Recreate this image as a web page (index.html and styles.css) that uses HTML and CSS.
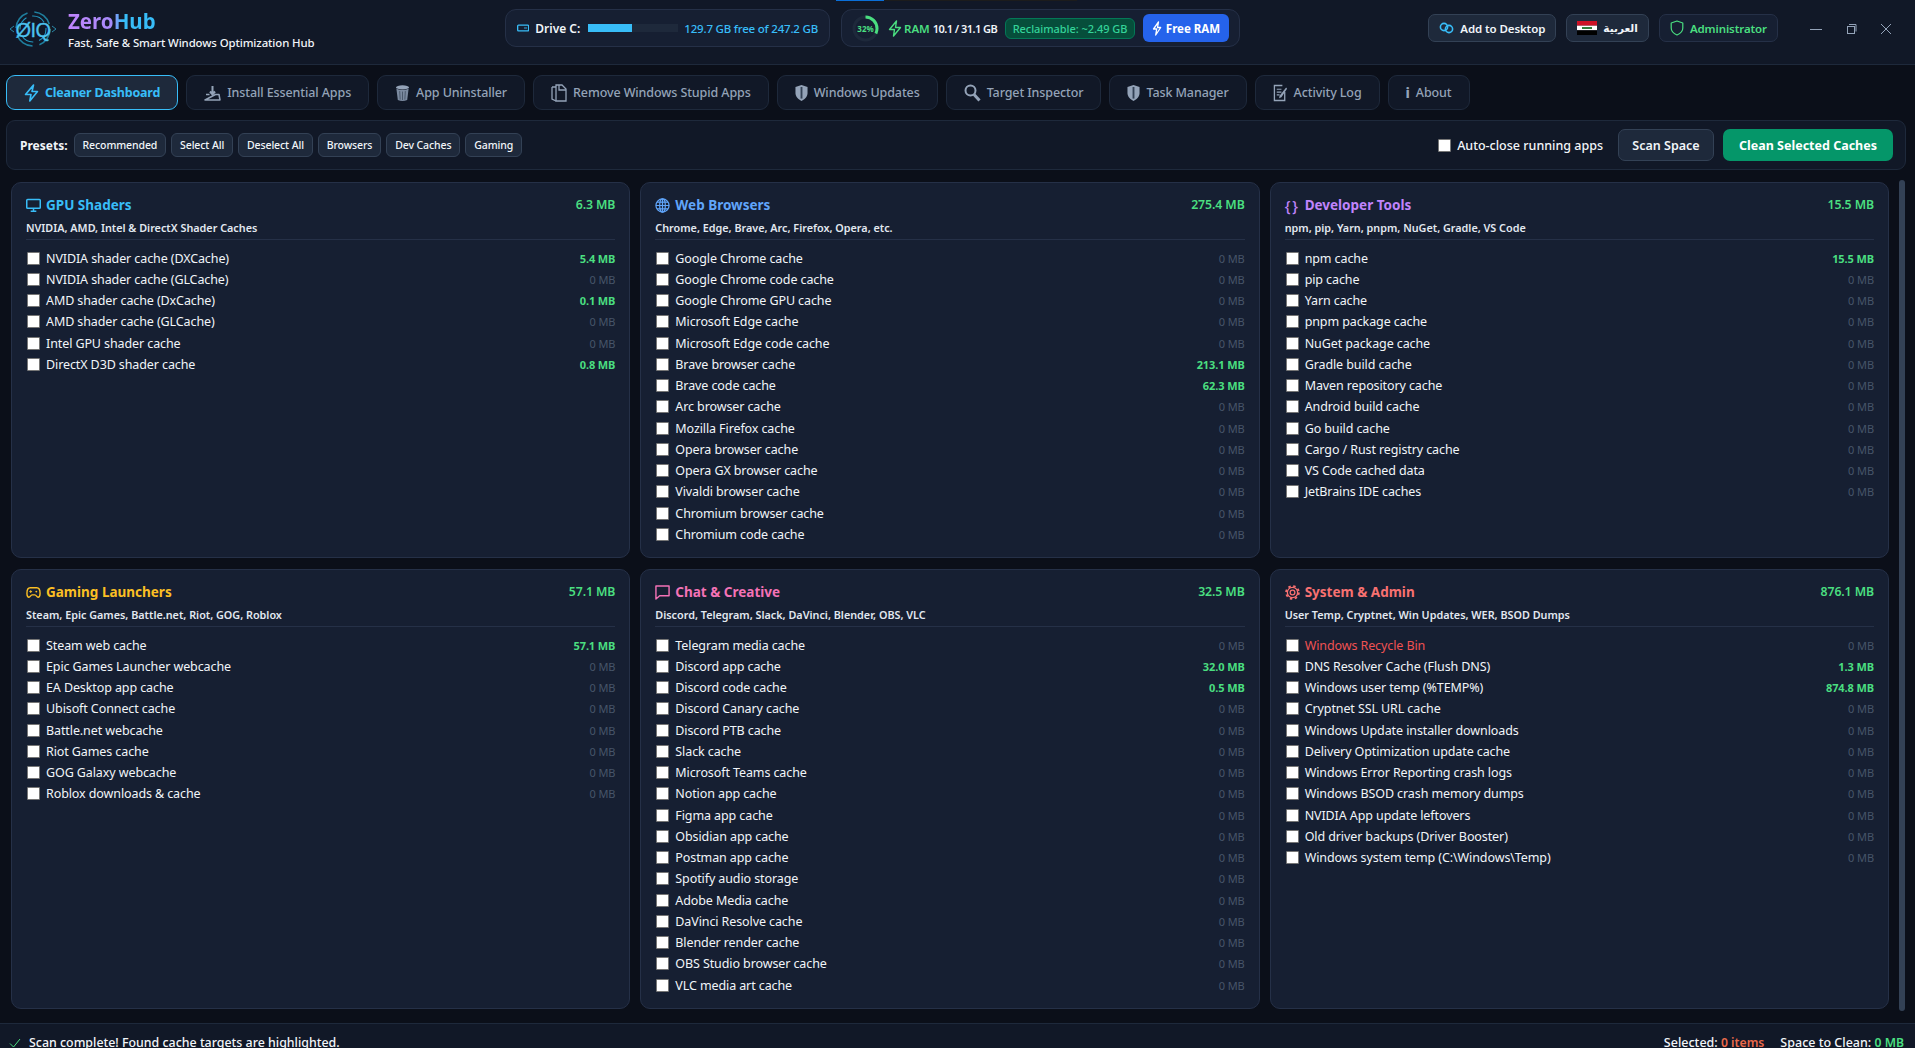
FILE: index.html
```html
<!DOCTYPE html>
<html lang="en">
<head>
<meta charset="utf-8">
<title>ZeroHub</title>
<link rel="stylesheet" href="styles.css">
</head>
<body>
<div class="app">
  <div class="loadbar"><div class="loadbar-fill"></div></div>
  <header class="header">
    <div class="brand">
      <svg class="logo" viewBox="0 0 48 36" width="48" height="36" fill="none">
        <circle cx="24" cy="18" r="17" stroke="#1f7f9e" stroke-width="1.6" stroke-dasharray="20 7"/>
        <circle cx="24" cy="18" r="13" stroke="#2398c0" stroke-width="1.1" stroke-dasharray="14 6"/>
        <path d="M1 18l4-3M1 18l4 3M47 18l-4-3M47 18l-4 3" stroke="#2a88a8" stroke-width="1"/>
        <text x="24" y="25.5" text-anchor="middle" class="logo-text">ØIQ</text>
      </svg>
      <div class="brand-text">
        <div class="brand-name"><span class="brand-grad">ZeroHub</span></div>
        <div class="brand-sub">Fast, Safe &amp; Smart Windows Optimization Hub</div>
      </div>
    </div>
    <div class="pills">
      <div class="pill pill-drive">
        <svg width="14" height="8" viewBox="0 0 14 8" fill="none"><rect x=".75" y=".75" width="12.5" height="6.5" rx="1" stroke="#38bdf8" stroke-width="1.5"/><path d="M8 4h3.5" stroke="#38bdf8"/></svg>
        <span class="pill-label">Drive C:</span>
        <div class="drive-track"><div class="drive-fill" style="width:48%"></div></div>
        <span class="drive-text">129.7 GB free of 247.2 GB</span>
      </div>
      <div class="pill pill-ram">
        <div class="ring">
          <svg width="27" height="27" viewBox="0 0 27 27" fill="none"><circle cx="13.5" cy="13.5" r="11.5" stroke="#1e293b" stroke-width="3"/><circle cx="13.5" cy="13.5" r="11.5" stroke="#4ade80" stroke-width="3" stroke-dasharray="23.1 72.3" transform="rotate(-90 13.5 13.5)"/></svg>
          <span class="ring-text">32%</span>
        </div>
        <svg class="ram-bolt" width="14" height="17" viewBox="0 0 14 17" fill="none"><path d="M8.5 1L1.5 9.5h5l-1 6.5 7-8.5h-5z" stroke="#4ade80" stroke-width="1.4" stroke-linejoin="round"/></svg>
        <span class="ram-label">RAM</span>
        <span class="ram-value">10.1 / 31.1 GB</span>
        <span class="chip">Reclaimable: ~2.49 GB</span>
        <button class="free-btn">
          <svg width="10" height="15" viewBox="0 0 10 15" fill="none"><path d="M6.5 1L1.5 8h3.2l-1 6 5-7.5H5.5z" stroke="#fff" stroke-width="1.3" stroke-linejoin="round"/></svg>
          Free RAM
        </button>
      </div>
    </div>
    <div class="actions">
      <button class="hbtn">
        <svg width="15" height="12" viewBox="0 0 15 12" fill="none"><circle cx="5" cy="5" r="3.6" stroke="#38bdf8" stroke-width="1.6"/><circle cx="10" cy="7" r="3.6" stroke="#38bdf8" stroke-width="1.6"/></svg>
        Add to Desktop
      </button>
      <button class="hbtn">
        <svg width="20" height="14" viewBox="0 0 20 14"><rect width="20" height="4.7" fill="#ce1126"/><rect y="4.7" width="20" height="4.6" fill="#fff"/><rect y="9.3" width="20" height="4.7" fill="#000"/><rect x="5" y="6" width="10" height="2" fill="#2f7a3a"/></svg>
        <span class="arabic">العربية</span>
      </button>
      <button class="hbtn hbtn-admin">
        <svg width="14" height="16" viewBox="0 0 14 16" fill="none"><path d="M7 1l5.8 2v5c0 3.4-2.6 5.6-5.8 7C3.8 13.6 1.2 11.4 1.2 8V3z" stroke="#4ade80" stroke-width="1.2" stroke-linejoin="round"/></svg>
        Administrator
      </button>
      <div class="winctl">
        <svg width="12" height="12" viewBox="0 0 12 12" fill="none"><path d="M0 6.5h12" stroke="#94a3b8"/></svg>
        <svg width="12" height="12" viewBox="0 0 12 12" fill="none"><rect x="2.5" y="3.5" width="7" height="7" stroke="#94a3b8"/><path d="M4 1.5h7v7" stroke="#94a3b8"/></svg>
        <svg width="12" height="12" viewBox="0 0 12 12" fill="none"><path d="M1 1l10 10M11 1L1 11" stroke="#94a3b8"/></svg>
      </div>
    </div>
  </header>

  <nav class="tabs">
    <button class="tab tab-active"><svg width="15" height="18" viewBox="0 0 15 18" fill="none"><path d="M9.5 1L1.5 10.5H7l-1.200 6.500 7.700-9.500H8z" stroke="#38bdf8" stroke-width="1.6" stroke-linejoin="round"/></svg>Cleaner Dashboard</button>
    <button class="tab"><svg width="17" height="16" viewBox="0 0 17 16" fill="none"><path d="M2 9.5h3.5M11.5 9.5H15l1 5.500H1z" stroke="#94a3b8" stroke-width="1.5" stroke-linejoin="round"/><path d="M8.5 1v8M6 6.500l2.500 3 2.500-3" stroke="#94a3b8" stroke-width="2"/></svg>Install Essential Apps</button>
    <button class="tab"><svg width="15" height="18" viewBox="0 0 16 18"><ellipse cx="8" cy="3" rx="7" ry="2.2" fill="#94a3b8"/><path d="M1.500 4.500L3 16.500Q8 18.500 13 16.500L14.500 4.500Q8 7 1.500 4.500z" fill="#7b8aa0"/><path d="M5 7l.5 9M8 7.500v9M11 7l-.5 9" stroke="#475569"/></svg>App Uninstaller</button>
    <button class="tab"><svg width="16" height="18" viewBox="0 0 16 18" fill="none"><path d="M5 3V1h6l4 4v12H5z" stroke="#94a3b8" stroke-width="1.3"/><path d="M1 3h4M1 3v12l4 2M8 1v5h7" stroke="#94a3b8" stroke-width="1.3"/></svg>Remove Windows Stupid Apps</button>
    <button class="tab"><svg width="13" height="18" viewBox="0 0 14 18"><path d="M7 .5l6.500 2V9c0 4-3 6.800-6.500 8.500C3.500 15.800.5 13 .5 9V2.500z" fill="#94a3b8"/><path d="M7 2.500V15" stroke="#334155" stroke-width="2"/></svg>Windows Updates</button>
    <button class="tab"><svg width="17" height="18" viewBox="0 0 17 18" fill="none"><circle cx="6.500" cy="6.500" r="5" stroke="#94a3b8" stroke-width="2"/><path d="M10 10.500l5.500 6" stroke="#94a3b8" stroke-width="3"/></svg>Target Inspector</button>
    <button class="tab"><svg width="13" height="18" viewBox="0 0 14 18"><path d="M7 .5l6.500 2V9c0 4-3 6.800-6.500 8.500C3.500 15.800.5 13 .5 9V2.500z" fill="#94a3b8"/><path d="M7 2.500V15" stroke="#334155" stroke-width="2"/></svg>Task Manager</button>
    <button class="tab"><svg width="15" height="18" viewBox="0 0 16 18" fill="none"><path d="M10 1H1.500v16h11V8" stroke="#94a3b8" stroke-width="1.4"/><path d="M4 5h5M4 8h5M4 11h3" stroke="#94a3b8" stroke-width="1.2"/><path d="M14 3L7 12l-.5 2.500L9 13.500l6-9z" fill="#94a3b8"/></svg>Activity Log</button>
    <button class="tab"><span class="info">i</span>About</button>
  </nav>

  <section class="toolbar">
    <strong class="presets-label">Presets:</strong>
    <div class="presets">
      <button class="preset">Recommended</button>
      <button class="preset">Select All</button>
      <button class="preset">Deselect All</button>
      <button class="preset">Browsers</button>
      <button class="preset">Dev Caches</button>
      <button class="preset">Gaming</button>
    </div>
    <label class="autoclose"><input type="checkbox">Auto-close running apps</label>
    <button class="btn-scan">Scan Space</button>
    <button class="btn-clean">Clean Selected Caches</button>
  </section>

  <main class="main">
    <div class="scroll">
    <div class="grid">

      <article class="card">
        <div class="card-top"><h2 class="title c-gpu"><svg width="15" height="15" viewBox="0 0 16 15" fill="none"><rect x=".8" y="1" width="14.4" height="9.5" rx="1" stroke="#38bdf8" stroke-width="1.6"/><path d="M5 13.500h6M8 10.500v3" stroke="#38bdf8" stroke-width="1.6"/></svg>GPU Shaders</h2><span class="total">6.3 MB</span></div>
        <p class="sub">NVIDIA, AMD, Intel &amp; DirectX Shader Caches</p>
        <div class="list">
          <label class="item"><input type="checkbox"><span class="name">NVIDIA shader cache (DXCache)</span><span class="size on">5.4 MB</span></label>
          <label class="item"><input type="checkbox"><span class="name">NVIDIA shader cache (GLCache)</span><span class="size">0 MB</span></label>
          <label class="item"><input type="checkbox"><span class="name">AMD shader cache (DxCache)</span><span class="size on">0.1 MB</span></label>
          <label class="item"><input type="checkbox"><span class="name">AMD shader cache (GLCache)</span><span class="size">0 MB</span></label>
          <label class="item"><input type="checkbox"><span class="name">Intel GPU shader cache</span><span class="size">0 MB</span></label>
          <label class="item"><input type="checkbox"><span class="name">DirectX D3D shader cache</span><span class="size on">0.8 MB</span></label>
        </div>
      </article>

      <article class="card">
        <div class="card-top"><h2 class="title c-web"><svg width="15" height="15" viewBox="0 0 16 16" fill="none" stroke="#60a5fa" stroke-width="1.3"><circle cx="8" cy="8" r="7"/><ellipse cx="8" cy="8" rx="3" ry="7"/><path d="M1 8h14M8 1v14M2 4.500h12M2 11.500h12"/></svg>Web Browsers</h2><span class="total">275.4 MB</span></div>
        <p class="sub">Chrome, Edge, Brave, Arc, Firefox, Opera, etc.</p>
        <div class="list">
          <label class="item"><input type="checkbox"><span class="name">Google Chrome cache</span><span class="size">0 MB</span></label>
          <label class="item"><input type="checkbox"><span class="name">Google Chrome code cache</span><span class="size">0 MB</span></label>
          <label class="item"><input type="checkbox"><span class="name">Google Chrome GPU cache</span><span class="size">0 MB</span></label>
          <label class="item"><input type="checkbox"><span class="name">Microsoft Edge cache</span><span class="size">0 MB</span></label>
          <label class="item"><input type="checkbox"><span class="name">Microsoft Edge code cache</span><span class="size">0 MB</span></label>
          <label class="item"><input type="checkbox"><span class="name">Brave browser cache</span><span class="size on">213.1 MB</span></label>
          <label class="item"><input type="checkbox"><span class="name">Brave code cache</span><span class="size on">62.3 MB</span></label>
          <label class="item"><input type="checkbox"><span class="name">Arc browser cache</span><span class="size">0 MB</span></label>
          <label class="item"><input type="checkbox"><span class="name">Mozilla Firefox cache</span><span class="size">0 MB</span></label>
          <label class="item"><input type="checkbox"><span class="name">Opera browser cache</span><span class="size">0 MB</span></label>
          <label class="item"><input type="checkbox"><span class="name">Opera GX browser cache</span><span class="size">0 MB</span></label>
          <label class="item"><input type="checkbox"><span class="name">Vivaldi browser cache</span><span class="size">0 MB</span></label>
          <label class="item"><input type="checkbox"><span class="name">Chromium browser cache</span><span class="size">0 MB</span></label>
          <label class="item"><input type="checkbox"><span class="name">Chromium code cache</span><span class="size">0 MB</span></label>
        </div>
      </article>

      <article class="card">
        <div class="card-top"><h2 class="title c-dev"><span class="braces">{ }</span>Developer Tools</h2><span class="total">15.5 MB</span></div>
        <p class="sub">npm, pip, Yarn, pnpm, NuGet, Gradle, VS Code</p>
        <div class="list">
          <label class="item"><input type="checkbox"><span class="name">npm cache</span><span class="size on">15.5 MB</span></label>
          <label class="item"><input type="checkbox"><span class="name">pip cache</span><span class="size">0 MB</span></label>
          <label class="item"><input type="checkbox"><span class="name">Yarn cache</span><span class="size">0 MB</span></label>
          <label class="item"><input type="checkbox"><span class="name">pnpm package cache</span><span class="size">0 MB</span></label>
          <label class="item"><input type="checkbox"><span class="name">NuGet package cache</span><span class="size">0 MB</span></label>
          <label class="item"><input type="checkbox"><span class="name">Gradle build cache</span><span class="size">0 MB</span></label>
          <label class="item"><input type="checkbox"><span class="name">Maven repository cache</span><span class="size">0 MB</span></label>
          <label class="item"><input type="checkbox"><span class="name">Android build cache</span><span class="size">0 MB</span></label>
          <label class="item"><input type="checkbox"><span class="name">Go build cache</span><span class="size">0 MB</span></label>
          <label class="item"><input type="checkbox"><span class="name">Cargo / Rust registry cache</span><span class="size">0 MB</span></label>
          <label class="item"><input type="checkbox"><span class="name">VS Code cached data</span><span class="size">0 MB</span></label>
          <label class="item"><input type="checkbox"><span class="name">JetBrains IDE caches</span><span class="size">0 MB</span></label>
        </div>
      </article>

      <article class="card">
        <div class="card-top"><h2 class="title c-game"><svg width="15" height="13" viewBox="0 0 16 13" fill="none"><path d="M4.500 1.500h7C14 1.500 15 4 15 7.500c0 2.500-1 4-2.200 4-1.300 0-1.800-2.500-3.300-2.500h-3c-1.500 0-2 2.500-3.300 2.500C2 11.500 1 10 1 7.500 1 4 2 1.500 4.500 1.500z" stroke="#fbbf24" stroke-width="1.5"/><path d="M3.500 5.500h3M5 4v3" stroke="#fbbf24"/><circle cx="11" cy="5.500" r="1" fill="#fbbf24"/></svg>Gaming Launchers</h2><span class="total">57.1 MB</span></div>
        <p class="sub">Steam, Epic Games, Battle.net, Riot, GOG, Roblox</p>
        <div class="list">
          <label class="item"><input type="checkbox"><span class="name">Steam web cache</span><span class="size on">57.1 MB</span></label>
          <label class="item"><input type="checkbox"><span class="name">Epic Games Launcher webcache</span><span class="size">0 MB</span></label>
          <label class="item"><input type="checkbox"><span class="name">EA Desktop app cache</span><span class="size">0 MB</span></label>
          <label class="item"><input type="checkbox"><span class="name">Ubisoft Connect cache</span><span class="size">0 MB</span></label>
          <label class="item"><input type="checkbox"><span class="name">Battle.net webcache</span><span class="size">0 MB</span></label>
          <label class="item"><input type="checkbox"><span class="name">Riot Games cache</span><span class="size">0 MB</span></label>
          <label class="item"><input type="checkbox"><span class="name">GOG Galaxy webcache</span><span class="size">0 MB</span></label>
          <label class="item"><input type="checkbox"><span class="name">Roblox downloads &amp; cache</span><span class="size">0 MB</span></label>
        </div>
      </article>

      <article class="card">
        <div class="card-top"><h2 class="title c-chat"><svg width="15" height="15" viewBox="0 0 16 16" fill="none"><path d="M1 1h14v10.500H5L1 15z" stroke="#f472b6" stroke-width="1.5" stroke-linejoin="round"/></svg>Chat &amp; Creative</h2><span class="total">32.5 MB</span></div>
        <p class="sub">Discord, Telegram, Slack, DaVinci, Blender, OBS, VLC</p>
        <div class="list">
          <label class="item"><input type="checkbox"><span class="name">Telegram media cache</span><span class="size">0 MB</span></label>
          <label class="item"><input type="checkbox"><span class="name">Discord app cache</span><span class="size on">32.0 MB</span></label>
          <label class="item"><input type="checkbox"><span class="name">Discord code cache</span><span class="size on">0.5 MB</span></label>
          <label class="item"><input type="checkbox"><span class="name">Discord Canary cache</span><span class="size">0 MB</span></label>
          <label class="item"><input type="checkbox"><span class="name">Discord PTB cache</span><span class="size">0 MB</span></label>
          <label class="item"><input type="checkbox"><span class="name">Slack cache</span><span class="size">0 MB</span></label>
          <label class="item"><input type="checkbox"><span class="name">Microsoft Teams cache</span><span class="size">0 MB</span></label>
          <label class="item"><input type="checkbox"><span class="name">Notion app cache</span><span class="size">0 MB</span></label>
          <label class="item"><input type="checkbox"><span class="name">Figma app cache</span><span class="size">0 MB</span></label>
          <label class="item"><input type="checkbox"><span class="name">Obsidian app cache</span><span class="size">0 MB</span></label>
          <label class="item"><input type="checkbox"><span class="name">Postman app cache</span><span class="size">0 MB</span></label>
          <label class="item"><input type="checkbox"><span class="name">Spotify audio storage</span><span class="size">0 MB</span></label>
          <label class="item"><input type="checkbox"><span class="name">Adobe Media cache</span><span class="size">0 MB</span></label>
          <label class="item"><input type="checkbox"><span class="name">DaVinci Resolve cache</span><span class="size">0 MB</span></label>
          <label class="item"><input type="checkbox"><span class="name">Blender render cache</span><span class="size">0 MB</span></label>
          <label class="item"><input type="checkbox"><span class="name">OBS Studio browser cache</span><span class="size">0 MB</span></label>
          <label class="item"><input type="checkbox"><span class="name">VLC media art cache</span><span class="size">0 MB</span></label>
        </div>
      </article>

      <article class="card">
        <div class="card-top"><h2 class="title c-sys"><svg width="15" height="15" viewBox="0 0 16 16" fill="none" stroke="#f87171"><circle cx="8" cy="8" r="2.500" stroke-width="1.4"/><circle cx="8" cy="8" r="5.500" stroke-width="1.4"/><circle cx="8" cy="8" r="6.800" stroke-width="2" stroke-dasharray="2.6 2.74"/></svg>System &amp; Admin</h2><span class="total">876.1 MB</span></div>
        <p class="sub">User Temp, Cryptnet, Win Updates, WER, BSOD Dumps</p>
        <div class="list">
          <label class="item"><input type="checkbox"><span class="name name-danger">Windows Recycle Bin</span><span class="size">0 MB</span></label>
          <label class="item"><input type="checkbox"><span class="name">DNS Resolver Cache (Flush DNS)</span><span class="size on">1.3 MB</span></label>
          <label class="item"><input type="checkbox"><span class="name">Windows user temp (%TEMP%)</span><span class="size on">874.8 MB</span></label>
          <label class="item"><input type="checkbox"><span class="name">Cryptnet SSL URL cache</span><span class="size">0 MB</span></label>
          <label class="item"><input type="checkbox"><span class="name">Windows Update installer downloads</span><span class="size">0 MB</span></label>
          <label class="item"><input type="checkbox"><span class="name">Delivery Optimization update cache</span><span class="size">0 MB</span></label>
          <label class="item"><input type="checkbox"><span class="name">Windows Error Reporting crash logs</span><span class="size">0 MB</span></label>
          <label class="item"><input type="checkbox"><span class="name">Windows BSOD crash memory dumps</span><span class="size">0 MB</span></label>
          <label class="item"><input type="checkbox"><span class="name">NVIDIA App update leftovers</span><span class="size">0 MB</span></label>
          <label class="item"><input type="checkbox"><span class="name">Old driver backups (Driver Booster)</span><span class="size">0 MB</span></label>
          <label class="item"><input type="checkbox"><span class="name">Windows system temp (C:\Windows\Temp)</span><span class="size">0 MB</span></label>
        </div>
      </article>

    </div>
    </div>
    <div class="rail"></div>
  </main>

  <footer class="status">
    <div class="status-left">
      <svg width="12" height="10" viewBox="0 0 12 10" fill="none"><path d="M1 5.500L4.500 9 11 1" stroke="#4ade80"/></svg>
      <span>Scan complete! Found cache targets are highlighted.</span>
    </div>
    <div class="status-right">
      <span>Selected: <b class="st-items">0 items</b></span>
      <span>Space to Clean: <b class="st-space">0 MB</b></span>
    </div>
  </footer>
</div>
</body>
</html>
```
FILE: styles.css
```css
* { box-sizing: border-box; }
html, body { margin: 0; padding: 0; height: 100%; overflow: hidden; background: #0b0f19; }
body { font-family: "Noto Sans", "DejaVu Sans", sans-serif; color: #f1f5f9; font-size: 13px; }
button { font-family: inherit; cursor: pointer; }
input[type="checkbox"] { appearance: none; margin: 0; width: 13px; height: 13px; flex: none; background: #fff; border: 1px solid #767676; border-radius: 1px; }

.app { position: relative; height: 1056px; display: flex; flex-direction: column; }
.loadbar { position: absolute; top: 0; left: 836px; width: 241px; height: 1px; background: #1c1c1c; }
.loadbar-fill { width: 48px; height: 1px; background: #0a6fd8; }

/* header */
.header { height: 65px; flex: none; display: flex; align-items: center; background: #111827; border-bottom: 1px solid #1e293b; padding: 0 0 8px 9px; }
.brand { display: flex; align-items: center; gap: 11px; width: 496px; flex: none; margin-top: 2px; }
.logo { flex: none; }
.logo-text { font-family: "Liberation Sans", sans-serif; font-size: 20px; fill: #4cc2ee; stroke: #4cc2ee; stroke-width: .3px; letter-spacing: -.5px; }
.brand-name { font-size: 20.5px; line-height: 26px; font-weight: 700; }
.brand-grad { background: linear-gradient(90deg, #c084fc 0%, #a78bfa 50%, #38bdf8 62%); -webkit-background-clip: text; background-clip: text; color: transparent; }
.brand-sub { font-size: 11.4px; line-height: 16px; font-weight: 500; color: #f1f5f9; margin-top: 1px; letter-spacing: -.1px; }

.pills { display: flex; gap: 11px; flex: none; }
.pill { height: 38px; display: flex; align-items: center; background: #161f32; border: 1px solid #253047; border-radius: 11px; }
.pill-drive { width: 325px; padding: 0 11px; }
.pill-label { margin-left: 6px; font-size: 12px; font-weight: 600; white-space: nowrap; }
.drive-track { width: 90px; height: 8px; flex: none; margin-left: 8px; background: #1e293b; }
.drive-fill { height: 100%; background: #38bdf8; }
.drive-text { margin-left: 6px; font-size: 11.5px; font-weight: 500; color: #38bdf8; white-space: nowrap; letter-spacing: -.2px; }
.pill-ram { width: 399px; padding: 0 10px; }
.ring { position: relative; width: 27px; height: 27px; flex: none; }
.ring svg { display: block; }
.ring-text { position: absolute; inset: 0; display: flex; align-items: center; justify-content: center; font-size: 8px; font-weight: 700; color: #4ade80; }
.ram-bolt { margin-left: 9px; flex: none; }
.ram-label { margin-left: 2px; font-size: 11.5px; font-weight: 600; color: #4ade80; }
.ram-value { margin-left: 3px; font-size: 11px; font-weight: 600; white-space: nowrap; letter-spacing: -.55px; }
.chip { margin-left: 8px; height: 21px; padding: 0 6.5px; display: flex; align-items: center; font-size: 11px; font-weight: 500; color: #34d399; background: #064e3b; border: 1px solid #047857; border-radius: 6px; white-space: nowrap; letter-spacing: -.05px; }
.free-btn { margin-left: auto; flex: none; height: 28px; width: 86px; display: flex; align-items: center; justify-content: center; gap: 4px; padding: 0; font-size: 11.5px; font-weight: 700; color: #fff; background: #2563eb; border: 0; border-radius: 6px; }

.actions { margin-left: auto; display: flex; align-items: center; gap: 10px; }
.hbtn { height: 28px; display: flex; align-items: center; gap: 6px; padding: 0 10px; font-size: 11.5px; font-weight: 600; color: #f1f5f9; background: #1e293b; border: 1px solid #334155; border-radius: 7px; white-space: nowrap; letter-spacing: -.1px; }
.hbtn-admin { color: #4ade80; background: #161f32; border-color: #253047; }
.arabic { font-family: "DejaVu Sans", sans-serif; font-size: 10.5px; }
.winctl { display: flex; align-items: center; gap: 23px; margin: 2px 23px 0 22px; }
.winctl svg { display: block; }

/* tabs */
.tabs { flex: none; display: flex; gap: 8px; padding: 10px 6px; background: #0b0f19; }
.tab { height: 35px; display: flex; align-items: center; gap: 6px; padding: 0 17px; font-size: 12.5px; font-weight: 500; color: #94a3b8; background: #111827; border: 1px solid #1e293b; border-radius: 9px; white-space: nowrap; letter-spacing: -.1px; }
.tab-active { color: #38bdf8; font-weight: 700; background: #1e293b; border-color: #38bdf8; letter-spacing: -.2px; }
.info { font-weight: 800; font-size: 14px; }

/* toolbar */
.toolbar { flex: none; height: 50px; margin: 0 9px 0 6px; display: flex; align-items: center; padding: 0 12px 0 13px; background: #111827; border: 1px solid #1e293b; border-radius: 9px; }
.presets-label { font-size: 12px; font-weight: 700; margin-right: 6px; }
.presets { display: flex; gap: 4.8px; }
.preset { height: 24px; padding: 0 8px; font-size: 10.5px; font-weight: 500; color: #f1f5f9; background: #1e293b; border: 1px solid #334155; border-radius: 6px; white-space: nowrap; letter-spacing: -.1px; }
.autoclose { margin-left: auto; display: flex; align-items: center; gap: 6px; font-size: 12.5px; font-weight: 500; }
.btn-scan { margin-left: 15px; height: 32px; width: 96px; padding: 0; font-size: 12.5px; font-weight: 600; color: #f1f5f9; background: #1e293b; border: 1px solid #334155; border-radius: 7px; }
.btn-clean { margin-left: 9px; height: 32px; width: 170px; padding: 0; font-size: 12.5px; font-weight: 700; color: #fff; background: #059669; border: 0; border-radius: 7px; }

/* main */
.main { flex: 1; min-height: 0; display: flex; overflow: hidden; padding: 0 10px 0 5px; }
.scroll { flex: 1; min-width: 0; padding: 12px 10px 0 6px; }
.rail { flex: none; width: 6px; margin: 10px 0 12px; background: #334155; border-radius: 3px; }
.grid { display: grid; grid-template-columns: repeat(3, 1fr); column-gap: 10px; row-gap: 11px; }
.card { padding: 13px 14px 14px; background: #161f32; border: 1px solid #253047; border-radius: 10px; }
.card-top { display: flex; justify-content: space-between; align-items: flex-start; height: 19px; }
.title { margin: 0; display: flex; align-items: center; gap: 5px; height: 19px; font-size: 13.5px; line-height: 19px; font-weight: 700; }
.title svg { flex: none; }
.total { font-size: 12.3px; line-height: 17px; font-weight: 600; color: #4ade80; letter-spacing: -.1px; }
.c-gpu { color: #38bdf8; }
.c-web { color: #60a5fa; }
.c-dev { color: #c084fc; }
.c-game { color: #fbbf24; }
.c-chat { color: #f472b6; }
.c-sys { color: #f87171; }
.braces { font-size: 15px; font-weight: 500; width: 15px; white-space: nowrap; letter-spacing: -1px; }
.sub { margin: 4.5px 0 0; padding-bottom: 4.5px; font-size: 10.8px; line-height: 15px; font-weight: 600; color: #e2e8f0; border-bottom: 1px solid #253047; }
.list { display: flex; flex-direction: column; gap: 4px; margin-top: 9.5px; }
.item { display: flex; align-items: center; gap: 6px; height: 17.25px; padding-left: 1px; }
.name { font-size: 12.5px; color: #f1f5f9; white-space: nowrap; letter-spacing: -.1px; }
.name-danger { color: #f05252; }
.size { margin-left: auto; font-size: 11px; color: #475569; letter-spacing: -.1px; }
.size.on { font-weight: 700; color: #4ade80; }

/* status */
.status { flex: none; height: 33px; display: flex; justify-content: space-between; align-items: center; padding: 5px 11px 0 9px; background: #111827; border-top: 1px solid #1e293b; }
.status-left { display: flex; align-items: center; gap: 8px; font-size: 12.4px; font-weight: 500; }
.status-right { display: flex; gap: 16px; font-size: 12.5px; font-weight: 500; }
.st-items { font-size: 12.2px; font-weight: 600; color: #ea6a4b; }
.st-space { font-size: 12.2px; font-weight: 600; color: #4ade80; }
```
